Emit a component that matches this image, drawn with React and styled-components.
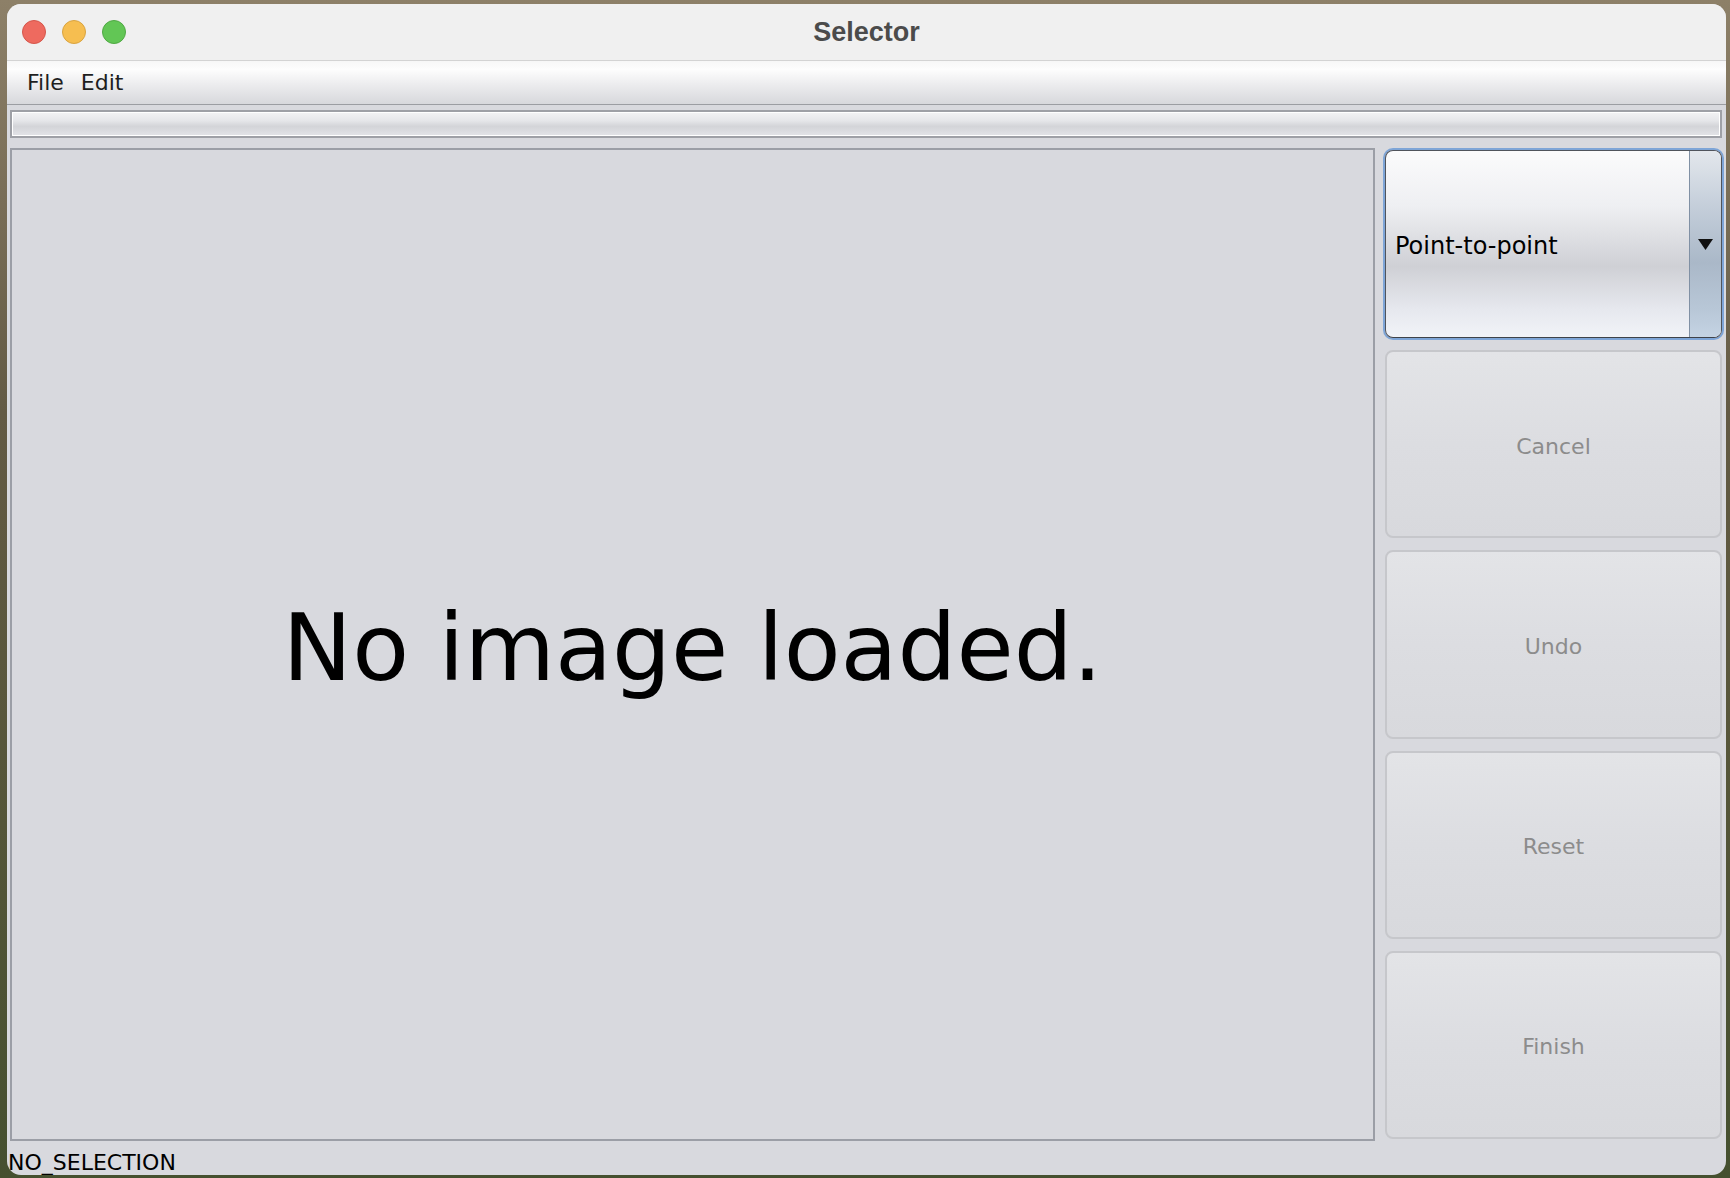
import React from 'react';
import styled, { createGlobalStyle } from 'styled-components';

const GlobalStyle = createGlobalStyle`
  html, body {
    margin: 0;
    padding: 0;
    height: 100%;
  }
  body {
    width: 1730px;
    height: 1178px;
    overflow: hidden;
    background: linear-gradient(180deg, #8d8068 0%, #635a44 35%, #545538 70%, #45502f 100%);
    font-family: "DejaVu Sans", "Noto Sans", sans-serif;
  }
`;

const Desktop = styled.div`
  padding: 4px 4px 0 7px;
`;

const Window = styled.div`
  width: 1719px;
  height: 1171px;
  border-radius: 14px;
  overflow: hidden;
  background: #d8d9de;
  display: flex;
  flex-direction: column;
`;

const TitleBar = styled.div`
  height: 56px;
  flex-shrink: 0;
  background: #f0f0f0;
  border-bottom: 1px solid #d3d3d3;
  display: flex;
  align-items: center;
  position: relative;
  padding-left: 15px;
`;

const Lights = styled.div`
  display: flex;
  gap: 16px;
`;

const Light = styled.span`
  width: 24px;
  height: 24px;
  border-radius: 50%;
  box-sizing: border-box;
  background: ${(p) => p.color};
  border: 1px solid ${(p) => p.edge};
`;

const Title = styled.div`
  position: absolute;
  left: 0;
  right: 0;
  top: 0;
  bottom: 0;
  display: flex;
  align-items: center;
  justify-content: center;
  font-family: "Liberation Sans", Arial, sans-serif;
  font-weight: bold;
  font-size: 27px;
  color: #4b4b4b;
  pointer-events: none;
`;

const MenuBar = styled.div`
  height: 43px;
  flex-shrink: 0;
  background: linear-gradient(180deg, #f7f7f7 0%, #fdfdfd 20%, #ececee 55%, #d7d8dc 100%);
  border-bottom: 1px solid #9b9da2;
  display: flex;
  align-items: center;
  padding-left: 20px;
  gap: 17px;
`;

const MenuItem = styled.span`
  font-size: 22px;
  color: #1e1e1e;
`;

const FieldRow = styled.div`
  padding: 5px 4px 10px 3px;
  flex-shrink: 0;
`;

const Field = styled.div`
  height: 28px;
  box-sizing: border-box;
  border: 2px solid #9ea0a6;
  box-shadow: inset 0 0 0 1px #ffffff;
  background: linear-gradient(180deg, #f3f3f5 0%, #e6e7ea 35%, #d3d4d8 60%, #e3e4e8 100%);
`;

const Main = styled.div`
  height: 993px;
  flex-shrink: 0;
  padding: 0 4px 0 3px;
  display: flex;
  gap: 10px;
`;

const Canvas = styled.div`
  flex: 1;
  box-sizing: border-box;
  border: 2px solid #9b9ea6;
  background: #d8d9de;
  display: flex;
  align-items: center;
  justify-content: center;
`;

const EmptyText = styled.div`
  font-size: 93px;
  color: #000;
  white-space: nowrap;
  padding-top: 6px;
`;

const Side = styled.div`
  width: 337px;
  box-sizing: border-box;
  padding: 2px 0;
  display: grid;
  grid-template-rows: repeat(5, 1fr);
  gap: 12px;
`;

const Combo = styled.div`
  box-sizing: border-box;
  border: 1px solid #50545c;
  border-bottom-color: #3e4249;
  border-radius: 8px;
  box-shadow: 0 0 0 2px #7ea5d7;
  overflow: hidden;
  display: flex;
  background: linear-gradient(180deg, #fbfbfc 0%, #eeeff2 30%, #cfd0d5 62%, #e6e8ee 85%, #f1f3f8 100%);
`;

const ComboLabel = styled.div`
  flex: 1;
  display: flex;
  align-items: center;
  padding: 4px 0 0 9px;
  font-size: 24px;
  color: #000;
`;

const ComboArrow = styled.div`
  width: 31px;
  border-left: 1px solid #8090a4;
  display: flex;
  align-items: center;
  justify-content: center;
  background: linear-gradient(180deg, #e3e7ec 0%, #c4ceda 30%, #aab8c8 60%, #b8c7d7 85%, #c4d3e3 100%);
`;

const Button = styled.button`
  box-sizing: border-box;
  border: 2px solid #c6c7cb;
  border-radius: 8px;
  background: linear-gradient(180deg, #e3e4e7 0%, #dcdde1 50%, #d8d9dd 100%);
  font-family: "DejaVu Sans", "Noto Sans", sans-serif;
  font-size: 22px;
  color: #8c8c8c;
  padding: 4px 0 0 0;
  margin: 0;
  cursor: default;
`;

const Status = styled.div`
  padding: 9px 0 0 1px;
  font-size: 22px;
  line-height: 26px;
  color: #000;
`;

const buttons = ['Cancel', 'Undo', 'Reset', 'Finish'];

export default function App() {
  return (
    <>
      <GlobalStyle />
      <Desktop>
        <Window>
          <TitleBar>
            <Lights>
              <Light color="#ee6a5f" edge="#d5564b" />
              <Light color="#f6be50" edge="#d9a441" />
              <Light color="#62c655" edge="#50a944" />
            </Lights>
            <Title>Selector</Title>
          </TitleBar>
          <MenuBar>
            <MenuItem>File</MenuItem>
            <MenuItem>Edit</MenuItem>
          </MenuBar>
          <FieldRow>
            <Field />
          </FieldRow>
          <Main>
            <Canvas>
              <EmptyText>No image loaded.</EmptyText>
            </Canvas>
            <Side>
              <Combo>
                <ComboLabel>Point-to-point</ComboLabel>
                <ComboArrow>
                  <svg width="15" height="12" viewBox="0 0 15 12">
                    <polygon points="0,1 15,1 7.5,12" fill="#111" />
                  </svg>
                </ComboArrow>
              </Combo>
              {buttons.map((b) => (
                <Button key={b} disabled>{b}</Button>
              ))}
            </Side>
          </Main>
          <Status>NO_SELECTION</Status>
        </Window>
      </Desktop>
    </>
  );
}
